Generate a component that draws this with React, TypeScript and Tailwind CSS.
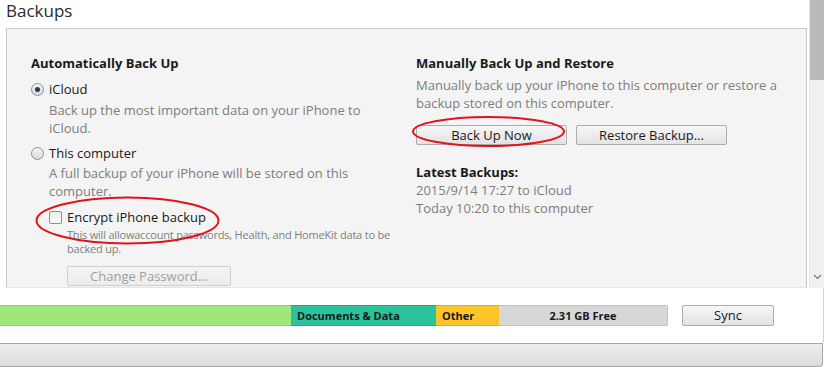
const FONT = "font-['Open_Sans','Noto_Sans',sans-serif]";

function Radio({ checked }: { checked?: boolean }) {
  return (
    <span className="w-[13px] h-[13px] rounded-full border border-[#8e8f8f] bg-gradient-to-b from-[#f4f4f4] to-[#dcdcdc] flex items-center justify-center shrink-0">
      {checked && <span className="w-[5px] h-[5px] rounded-full bg-[#1b3a70]" />}
    </span>
  );
}

function Checkbox() {
  return (
    <span className="w-[13px] h-[13px] rounded-[2px] border border-[#8f8f8f] bg-gradient-to-b from-[#ececec] to-[#fafafa] shrink-0" />
  );
}

function Button({ label, width, disabled }: { label: string; width: string; disabled?: boolean }) {
  return (
    <button
      className={`${width} h-[20px] rounded-[2px] border flex items-center justify-center text-[13px] leading-none ${
        disabled
          ? 'border-[#cfcfcf] bg-gradient-to-b from-[#f4f4f4] to-[#ececec] text-[#a0a0a0]'
          : 'border-[#acacac] bg-gradient-to-b from-[#f6f6f6] to-[#e3e3e3] text-[#1a1a1a]'
      }`}
    >
      {label}
    </button>
  );
}

export default function App() {
  return (
    <div className={`${FONT} relative w-[824px] h-[367px] bg-white overflow-hidden`}>
      <div className="flex h-[288px]">
        <div className="w-[809px] flex flex-col">
          <div className="h-[28px] shrink-0 pl-[6px] pt-[1px] text-[17px] leading-[20px] text-[#2b2b2b]">Backups</div>
          <div className="ml-[6px] w-[801px] flex-1 min-h-0 overflow-hidden border-l border-t border-r border-[#c9c9c9] bg-[#f4f4f4] border-b border-b-[#e4e4e4]">
            <div className="grid grid-cols-[385px_1fr] pl-[24px] pt-[25px]">
              {/* left column */}
              <div className="flex flex-col">
                <div className="text-[13px] leading-[18px] font-bold text-[#1a1a1a]">Automatically Back Up</div>
                <div className="mt-[8px] flex items-center gap-[5px] text-[13px] leading-[18px] text-[#1a1a1a]">
                  <Radio checked />
                  <span>iCloud</span>
                </div>
                <div className="mt-[3px] pl-[18px] text-[13px] leading-[18px] text-[#7d7d7d]">
                  Back up the most important data on your iPhone to
                  <br />
                  iCloud.
                </div>
                <div className="mt-[7px] flex items-center gap-[5px] text-[13px] leading-[18px] text-[#1a1a1a]">
                  <Radio />
                  <span>This computer</span>
                </div>
                <div className="mt-[2px] pl-[18px] text-[13px] leading-[18px] text-[#7d7d7d]">
                  A full backup of your iPhone will be stored on this
                  <br />
                  computer.
                </div>
                <div className="mt-[8px] pl-[18px] flex items-center gap-[5px] text-[13px] leading-[18px] text-[#1a1a1a]">
                  <Checkbox />
                  <span>Encrypt iPhone backup</span>
                </div>
                <div className="mt-[2px] pl-[36px] text-[11px] leading-[14px] tracking-[-0.2px] text-[#808080]">
                  This will allowaccount passwords, Health, and HomeKit data to be
                  <br />
                  backed up.
                </div>
                <div className="mt-[10px] pl-[36px]">
                  <Button label="Change Password..." width="w-[164px]" disabled />
                </div>
              </div>

              {/* right column */}
              <div className="flex flex-col">
                <div className="text-[13px] leading-[18px] font-bold text-[#1a1a1a]">Manually Back Up and Restore</div>
                <div className="mt-[4px] text-[13px] leading-[18px] text-[#7d7d7d]">
                  Manually back up your iPhone to this computer or restore a
                  <br />
                  backup stored on this computer.
                </div>
                <div className="mt-[13px] flex gap-[9px]">
                  <Button label="Back Up Now" width="w-[151px]" />
                  <Button label="Restore Backup..." width="w-[151px]" />
                </div>
                <div className="mt-[18px] text-[13px] leading-[18px] font-bold text-[#1a1a1a]">Latest Backups:</div>
                <div className="text-[13px] leading-[18px] text-[#7d7d7d]">
                  2015/9/14 17:27 to iCloud
                  <br />
                  Today 10:20 to this computer
                </div>
              </div>
            </div>
          </div>
        </div>

        {/* scrollbar */}
        <div className="w-[15px] bg-[#f0f0f0] border-l border-[#e6e6e6] flex flex-col">
          <div className="h-[80px] bg-[#b9b9b9]" />
          <div className="flex-1" />
          <div className="h-[18px] flex items-center justify-center mb-[2px]">
            <svg width="9" height="6" viewBox="0 0 9 6">
              <path d="M1 1 L4.5 4.5 L8 1" fill="none" stroke="#7a7a7a" strokeWidth="1.2" />
            </svg>
          </div>
        </div>
      </div>

      {/* storage bar + sync */}
      <div className="h-[55px] flex items-center border-r border-[#d0d0d0]">
        <div className="flex h-[21px] text-[11px] font-bold text-[#1a1a1a] leading-[19px]">
          <div className="w-[291px] bg-[#9fe77b] border-y border-[#88d465]" />
          <div className="w-[145px] bg-[#2ac39c] border-y border-[#1eaa86] pl-[6px]">Documents &amp; Data</div>
          <div className="w-[63px] bg-[#fec52a] border-y border-[#e3ab1c] pl-[6px]">Other</div>
          <div className="w-[169px] bg-[#d7d7d7] border-y border-r border-[#c2c2c2] rounded-r-[2px] text-center">2.31 GB Free</div>
        </div>
        <div className="ml-[14px]">
          <Button label="Sync" width="w-[92px] h-[21px]" />
        </div>
      </div>

      {/* bottom bar */}
      <div className="h-[24px] w-[823px] border-t border-b border-r border-[#a4a4a4] rounded-br-[4px] bg-gradient-to-b from-[#ededed] to-[#dcdcdc]" />

      {/* red annotation ellipses */}
      <svg className="absolute left-0 top-0 pointer-events-none" width="824" height="367">
        <ellipse cx="127.5" cy="220.5" rx="91" ry="23" fill="none" stroke="#e2131b" strokeWidth="2" />
        <ellipse cx="488.5" cy="131.5" rx="75.5" ry="14.5" fill="none" stroke="#e2131b" strokeWidth="2" />
      </svg>
    </div>
  );
}
